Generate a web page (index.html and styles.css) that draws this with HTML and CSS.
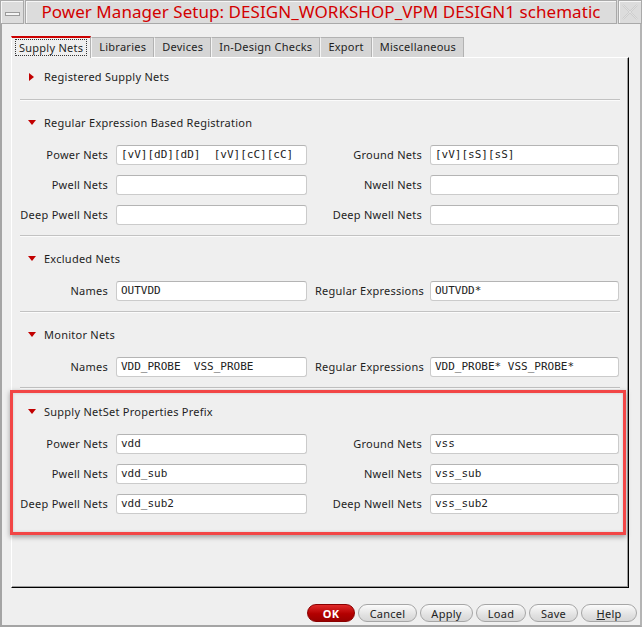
FILE: index.html
```html
<!DOCTYPE html>
<html>
<head>
<meta charset="utf-8">
<link rel="stylesheet" href="styles.css">
</head>
<body>
<div class="window">
  <div class="titlebar">
    <div class="tb-box tb-menu"><span class="minus"></span></div>
    <div class="tb-box tb-title">Power Manager Setup: DESIGN_WORKSHOP_VPM DESIGN1 schematic</div>
    <div class="tb-box tb-close">
      <svg width="16" height="16" viewBox="0 0 16 16"><path d="M1 1 L15 15 M15 1 L1 15" stroke="#c4c4c4" stroke-width="1.6" fill="none"/><path d="M1 1 L15 15 M15 1 L1 15" stroke="#f4f4f4" stroke-width="0.6" fill="none"/></svg>
    </div>
  </div>
  <div class="client">
    <div class="tabs">
      <div class="tab active"><span class="focus">Supply Nets</span></div>
      <div class="tab">Libraries</div>
      <div class="tab">Devices</div>
      <div class="tab">In-Design Checks</div>
      <div class="tab">Export</div>
      <div class="tab">Miscellaneous</div>
    </div>
    <div class="panel">
      <div class="sec sec-first">
        <div class="sec-head"><span class="tri tri-right"></span>Registered Supply Nets</div>
      </div>
      <div class="sep"></div>
      <div class="sec">
        <div class="sec-head"><span class="tri tri-down"></span>Regular Expression Based Registration</div>
        <div class="rows">
          <label class="lbl">Power Nets</label><div class="field">[vV][dD][dD]  [vV][cC][cC]</div>
          <label class="lbl">Ground Nets</label><div class="field">[vV][sS][sS]</div>
          <label class="lbl">Pwell Nets</label><div class="field"></div>
          <label class="lbl">Nwell Nets</label><div class="field"></div>
          <label class="lbl">Deep Pwell Nets</label><div class="field"></div>
          <label class="lbl">Deep Nwell Nets</label><div class="field"></div>
        </div>
      </div>
      <div class="sep"></div>
      <div class="sec">
        <div class="sec-head"><span class="tri tri-down"></span>Excluded Nets</div>
        <div class="rows">
          <label class="lbl">Names</label><div class="field">OUTVDD</div>
          <label class="lbl">Regular Expressions</label><div class="field">OUTVDD*</div>
        </div>
      </div>
      <div class="sep"></div>
      <div class="sec">
        <div class="sec-head"><span class="tri tri-down"></span>Monitor Nets</div>
        <div class="rows">
          <label class="lbl">Names</label><div class="field">VDD_PROBE  VSS_PROBE</div>
          <label class="lbl">Regular Expressions</label><div class="field">VDD_PROBE* VSS_PROBE*</div>
        </div>
      </div>
      <div class="sep"></div>
      <div class="sec sec-highlight">
        <div class="sec-head"><span class="tri tri-down"></span>Supply NetSet Properties Prefix</div>
        <div class="rows">
          <label class="lbl">Power Nets</label><div class="field">vdd</div>
          <label class="lbl">Ground Nets</label><div class="field">vss</div>
          <label class="lbl">Pwell Nets</label><div class="field">vdd_sub</div>
          <label class="lbl">Nwell Nets</label><div class="field">vss_sub</div>
          <label class="lbl">Deep Pwell Nets</label><div class="field">vdd_sub2</div>
          <label class="lbl">Deep Nwell Nets</label><div class="field">vss_sub2</div>
        </div>
      </div>
    </div>
    <div class="buttons">
      <button class="btn btn-ok">OK</button>
      <button class="btn btn-cancel">Cancel</button>
      <button class="btn btn-apply">Apply</button>
      <button class="btn btn-load">Load</button>
      <button class="btn btn-save">Save</button>
      <button class="btn btn-help"><u>H</u>elp</button>
    </div>
  </div>
</div>
</body>
</html>
```
FILE: styles.css
```css
html, body {
  margin: 0;
  padding: 0;
  background: #efefef;
}
body {
  font-family: "Noto Sans", "DejaVu Sans", sans-serif;
  font-size: 11px;
  letter-spacing: 0.25px;
  color: #1e1e1e;
}
.window {
  width: 642px;
  height: 627px;
  display: flex;
  flex-direction: column;
  background: #efefef;
}
.titlebar {
  display: flex;
  height: 24px;
  flex: none;
  background: #dcdcdc;
}
.tb-box {
  box-sizing: border-box;
  height: 24px;
  border: 1px solid #a9a9a9;
  box-shadow: inset 1px 1px 0 #f6f6f6;
  background: #dcdcdc;
}
.tb-menu {
  width: 24px;
  display: flex;
  align-items: center;
  justify-content: center;
  margin-right: 1px;
}
.minus {
  display: block;
  width: 13px;
  height: 2px;
  border: 1px solid #9a9a9a;
  background: #f4f4f4;
  margin-top: 3px;
}
.tb-title {
  flex: 1;
  text-align: center;
  color: #d30000;
  font-size: 17px;
  letter-spacing: 0.05px;
  line-height: 21px;
  white-space: nowrap;
  overflow: hidden;
  margin-right: 1px;
}
.tb-close {
  width: 24px;
  display: flex;
  align-items: center;
  justify-content: center;
}
.client {
  flex: 1;
  box-sizing: border-box;
  border-left: 2px solid #a4a4a4;
  border-right: 2px solid #b4b4b4;
  border-bottom: 2px solid #a4a4a4;
  padding: 12px 11px 0 9px;
  display: flex;
  flex-direction: column;
}
.tabs {
  display: flex;
  align-items: flex-end;
  height: 21px;
}
.tab {
  box-sizing: border-box;
  height: 20px;
  line-height: 18px;
  padding: 0 7px;
  background: #d5d5d5;
  border: 1px solid #b2b2b2;
  border-bottom: 0;
  border-left-color: #f4f4f4;
  white-space: nowrap;
}
.tab.active {
  position: relative;
  z-index: 1;
  height: 22px;
  margin-bottom: -1px;
  background: #efefef;
  border-top: 2px solid #cc0000;
  border-left: 1px solid #ffffff;
  padding: 0 3px;
}
.focus {
  display: inline-block;
  margin-top: 1px;
  padding: 0 3px;
  line-height: 15px;
  border: 1px dotted #333;
}
.panel {
  box-sizing: border-box;
  height: 531px;
  border-top: 1px solid #ffffff;
  border-left: 1px solid #ffffff;
  border-right: 1px solid #000;
  border-bottom: 1px solid #000;
  box-shadow: inset -1px -1px 0 #9c9c9c;
  background: #efefef;
}
.sec {
  padding: 12px 8px 10px;
}
.sec-first {
  padding-top: 9px;
  padding-bottom: 12px;
}
.sec-head {
  height: 20px;
  line-height: 19px;
  display: flex;
  align-items: flex-start;
  padding-left: 8px;
  white-space: nowrap;
}
.tri {
  display: inline-block;
  width: 16px;
  height: 8px;
  margin-top: 6px;
  position: relative;
}
.tri::before {
  content: "";
  position: absolute;
  width: 0;
  height: 0;
}
.tri-right::before {
  left: 1px;
  top: 0;
  border-top: 4px solid transparent;
  border-bottom: 4px solid transparent;
  border-left: 5px solid #c20000;
}
.tri-down::before {
  left: 0;
  top: 1px;
  border-left: 4px solid transparent;
  border-right: 4px solid transparent;
  border-top: 5px solid #c20000;
}
.rows {
  margin-top: 12px;
  display: grid;
  grid-template-columns: 88px 191px 107px 189px;
  column-gap: 8px;
  row-gap: 10px;
  align-items: start;
}
.lbl {
  text-align: right;
  white-space: nowrap;
  line-height: 19px;
}
.field {
  box-sizing: border-box;
  height: 20px;
  border: 1px solid #cbcbcb;
  border-top-color: #b4b4b4;
  border-radius: 3px;
  background: #ffffff;
  font-family: "DejaVu Sans Mono", "Liberation Mono", monospace;
  font-size: 11px;
  letter-spacing: 0;
  line-height: 18px;
  padding: 0 4px;
  white-space: pre;
  overflow: hidden;
  color: #222;
}
.sep {
  height: 1px;
  margin: 0 8px;
  background: #c2c2c2;
  border-bottom: 1px solid #fbfbfb;
}
.sec-highlight {
  margin: 1px 2px 0 -2px;
  border: 3px solid #f24646;
  padding: 9px 7px 18px;
  box-shadow: 0 2px 5px rgba(0, 0, 0, 0.35), inset 0 0 3px rgba(0, 0, 0, 0.15);
}
.buttons {
  display: flex;
  justify-content: flex-end;
  gap: 3px;
  margin: 16px -8px 0 0;
}
.btn {
  box-sizing: border-box;
  height: 18px;
  padding: 0;
  border: 1px solid #a6a6a6;
  border-radius: 9px;
  background: linear-gradient(#fbfbfb, #e2e2e2 60%, #d6d6d6);
  font-family: "Noto Sans", "DejaVu Sans", sans-serif;
  font-size: 11px;
  letter-spacing: 0.25px;
  line-height: 15px;
  color: #222;
  text-align: center;
}
.btn-ok {
  width: 48px;
  background: linear-gradient(#e02a2a, #b30000 55%, #9a0000);
  border-color: #8a0000;
  color: #fff;
  font-weight: bold;
}
.btn-cancel { width: 59px; }
.btn-apply { width: 53px; }
.btn-load { width: 50px; }
.btn-save { width: 49px; }
.btn-help { width: 56px; }
```
